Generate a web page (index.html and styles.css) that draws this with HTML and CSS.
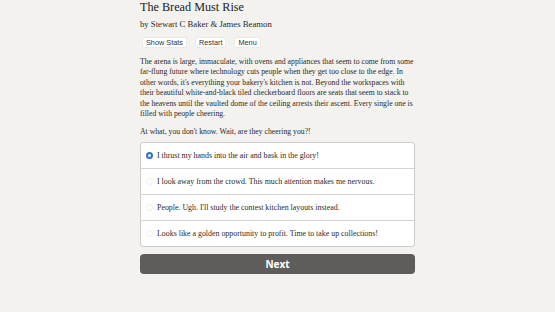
FILE: index.html
```html
<!DOCTYPE html>
<html lang="en">
<head>
  <meta charset="UTF-8">
  <title>The Bread Must Rise</title>
  <link rel="stylesheet" href="styles.css">
</head>
<body>
  <div class="story">
    <h1 class="title">The Bread Must Rise</h1>
    <div class="byline">by Stewart C Baker &amp; James Beamon</div>
    <div class="toolbar">
      <button class="tool-button">Show Stats</button>
      <button class="tool-button">Restart</button>
      <button class="tool-button">Menu</button>
    </div>

    <p class="passage">The arena is large, immaculate, with ovens and appliances that seem to come from some far-flung future where technology cuts people when they get too close to the edge. In other words, it's everything your bakery's kitchen is not. Beyond the workspaces with their beautiful white-and-black tiled checkerboard floors are seats that seem to stack to the heavens until the vaulted dome of the ceiling arrests their ascent. Every single one is filled with people cheering.</p>
    <p class="passage">At what, you don't know. Wait, are they cheering you?!</p>

    <div class="choices">
      <label class="choice"><span class="radio checked"></span>I thrust my hands into the air and bask in the glory!</label>
      <label class="choice"><span class="radio"></span>I look away from the crowd. This much attention makes me nervous.</label>
      <label class="choice"><span class="radio"></span>People. Ugh. I'll study the contest kitchen layouts instead.</label>
      <label class="choice"><span class="radio"></span>Looks like a golden opportunity to profit. Time to take up collections!</label>
    </div>

    <button class="next-button">Next</button>
  </div>
</body>
</html>
```

FILE: styles.css
```css
body {
  margin: 0;
  background-color: #f3f2ef;
  color: #2b2a28;
  font-family: 'Liberation Serif', serif;
}

.story {
  width: 275px;
  margin: 0 auto;
}

.title {
  font-size: 12.2px;
  font-weight: normal;
  margin: 0;
  line-height: 15px;
  color: #222;
}

.byline {
  font-size: 8.7px;
  margin-top: 3px;
  line-height: 12px;
}

.toolbar {
  display: flex;
  gap: 8px;
  margin-top: 7px;
  padding-left: 2px;
}

.tool-button {
  font-family: 'Liberation Sans', sans-serif;
  font-size: 7.3px;
  background-color: #fff;
  color: #333;
  border: 1px solid #ebeae6;
  border-radius: 2px;
  padding: 0 3px;
  height: 11px;
  line-height: 9px;
}

.passage {
  font-size: 7.74px;
  line-height: 10.4px;
  margin: 9px 0 0 0;
}

.passage + .passage {
  margin-top: 7.6px;
}

.choices {
  margin-top: 5px;
  background-color: #fff;
  border: 1px solid #cfcdc9;
  border-radius: 3px;
}

.choice {
  display: flex;
  align-items: center;
  height: 25px;
  padding-left: 5px;
  font-size: 7.9px;
  border-top: 1px solid #d6d4d0;
}

.choice:first-child {
  border-top: none;
}

.radio {
  width: 5px;
  height: 5px;
  border-radius: 50%;
  border: 1px solid #efefef;
  margin-right: 4px;
  background-color: #fff;
}

.radio.checked {
  width: 3px;
  height: 3px;
  border: 2px solid #2f72c4;
  background-color: #fff;
}

.next-button {
  display: block;
  width: 100%;
  margin-top: 7px;
  height: 20px;
  border: none;
  border-radius: 4px;
  background-color: #5e5d5b;
  color: #fff;
  font-family: 'Open Sans', sans-serif;
  font-weight: bold;
  font-size: 10px;
}
```
